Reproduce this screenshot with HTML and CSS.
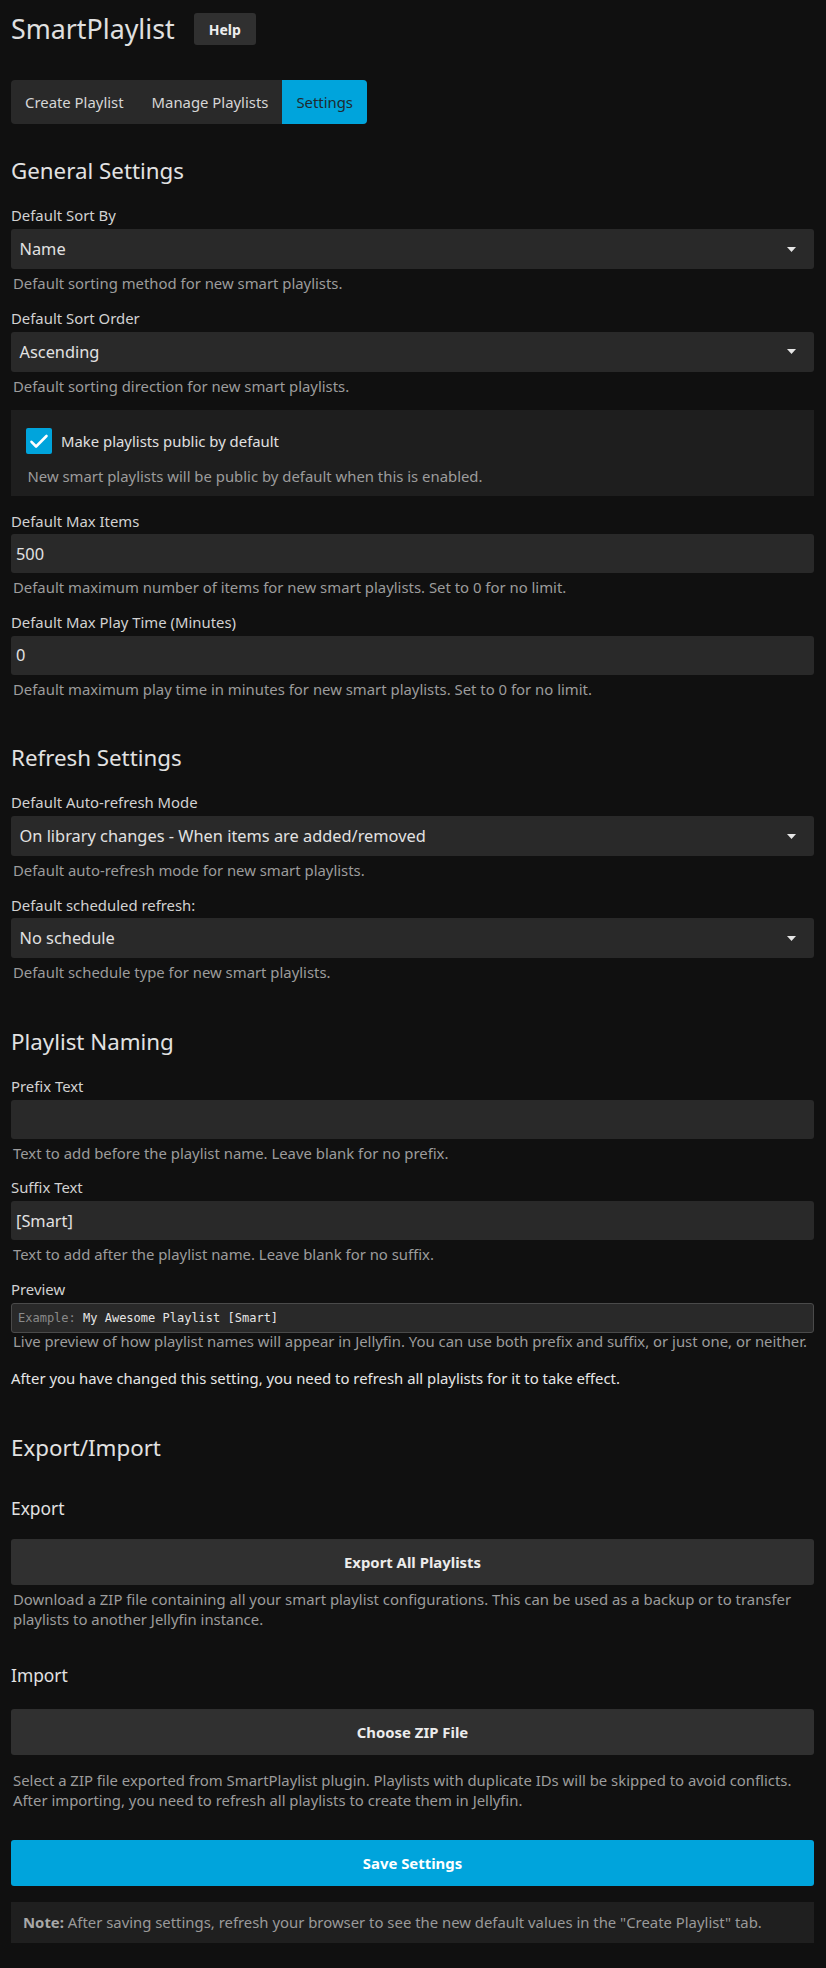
FILE: index.html
```html
<!DOCTYPE html>
<html lang="en">
<head>
<meta charset="utf-8">
<title>SmartPlaylist Settings</title>
<link rel="stylesheet" href="styles.css">
</head>
<body>
<div class="page">
  <header class="header">
    <h1 class="title">SmartPlaylist</h1>
    <button class="help-btn">Help</button>
  </header>

  <nav class="tabs">
    <span class="tab">Create Playlist</span>
    <span class="tab">Manage Playlists</span>
    <span class="tab tab-active">Settings</span>
  </nav>

  <section class="section section-first">
    <h2>General Settings</h2>
    <div class="field">
      <label class="label">Default Sort By</label>
      <div class="select"><span>Name</span><svg class="arrow" width="9" height="5" viewBox="0 0 9 5"><path d="M0 0h9L4.5 5z" fill="#e6e6e6"/></svg></div>
      <div class="help">Default sorting method for new smart playlists.</div>
    </div>
    <div class="field">
      <label class="label">Default Sort Order</label>
      <div class="select"><span>Ascending</span><svg class="arrow" width="9" height="5" viewBox="0 0 9 5"><path d="M0 0h9L4.5 5z" fill="#e6e6e6"/></svg></div>
      <div class="help">Default sorting direction for new smart playlists.</div>
    </div>
    <div class="check-box">
      <div class="check-row">
        <svg class="checkbox" width="26" height="26" viewBox="0 0 26 26"><rect width="26" height="26" rx="2" fill="#00a4dc"/><path d="M5.5 13.8l4.6 4.7L20.5 8" fill="none" stroke="#fff" stroke-width="2.6" stroke-linecap="round" stroke-linejoin="round"/></svg>
        <span class="check-label">Make playlists public by default</span>
      </div>
      <div class="help check-help">New smart playlists will be public by default when this is enabled.</div>
    </div>
    <div class="field">
      <label class="label">Default Max Items</label>
      <input class="input" type="text" value="500">
      <div class="help">Default maximum number of items for new smart playlists. Set to 0 for no limit.</div>
    </div>
    <div class="field">
      <label class="label">Default Max Play Time (Minutes)</label>
      <input class="input" type="text" value="0">
      <div class="help">Default maximum play time in minutes for new smart playlists. Set to 0 for no limit.</div>
    </div>
  </section>

  <section class="section">
    <h2>Refresh Settings</h2>
    <div class="field">
      <label class="label">Default Auto-refresh Mode</label>
      <div class="select"><span>On library changes - When items are added/removed</span><svg class="arrow" width="9" height="5" viewBox="0 0 9 5"><path d="M0 0h9L4.5 5z" fill="#e6e6e6"/></svg></div>
      <div class="help">Default auto-refresh mode for new smart playlists.</div>
    </div>
    <div class="field">
      <label class="label">Default scheduled refresh:</label>
      <div class="select"><span>No schedule</span><svg class="arrow" width="9" height="5" viewBox="0 0 9 5"><path d="M0 0h9L4.5 5z" fill="#e6e6e6"/></svg></div>
      <div class="help">Default schedule type for new smart playlists.</div>
    </div>
  </section>

  <section class="section">
    <h2>Playlist Naming</h2>
    <div class="field">
      <label class="label">Prefix Text</label>
      <input class="input" type="text" value="">
      <div class="help">Text to add before the playlist name. Leave blank for no prefix.</div>
    </div>
    <div class="field">
      <label class="label">Suffix Text</label>
      <input class="input" type="text" value="[Smart]">
      <div class="help">Text to add after the playlist name. Leave blank for no suffix.</div>
    </div>
    <div class="field field-preview">
      <label class="label">Preview</label>
      <div class="preview"><span class="preview-key">Example:</span> My Awesome Playlist [Smart]</div>
      <div class="help help-tight">Live preview of how playlist names will appear in Jellyfin. You can use both prefix and suffix, or just one, or neither.</div>
    </div>
    <p class="notice">After you have changed this setting, you need to refresh all playlists for it to take effect.</p>
  </section>

  <section class="section">
    <h2>Export/Import</h2>
    <h3 class="sub sub-export">Export</h3>
    <button class="btn">Export All Playlists</button>
    <div class="help">Download a ZIP file containing all your smart playlist configurations. This can be used as a backup or to transfer playlists to another Jellyfin instance.</div>
    <h3 class="sub sub-import">Import</h3>
    <button class="btn">Choose ZIP File</button>
    <div class="help help-import">Select a ZIP file exported from SmartPlaylist plugin. Playlists with duplicate IDs will be skipped to avoid conflicts. After importing, you need to refresh all playlists to create them in Jellyfin.</div>
  </section>

  <button class="btn btn-primary">Save Settings</button>
  <div class="note"><strong>Note:</strong> After saving settings, refresh your browser to see the new default values in the "Create Playlist" tab.</div>
</div>
</body>
</html>
```

FILE: styles.css
```css
html, body {
  margin: 0;
  padding: 0;
  background: #101010;
}

body {
  font-family: "Noto Sans", "Open Sans", sans-serif;
  font-size: 14.88px;
  line-height: 20.09px;
  color: #dddddd;
}

.page {
  padding: 13px 12px 20px 11px;
}

.header {
  display: flex;
  align-items: center;
  gap: 19px;
  height: 32px;
}

.title {
  margin: 0;
  font-size: 26.8px;
  line-height: 32px;
  font-weight: 400;
  color: #e0e0e0;
}

.help-btn {
  height: 32px;
  padding: 0 15px;
  border: 0;
  border-radius: 3px;
  background: #303030;
  color: #eeeeee;
  font-family: "Noto Sans", sans-serif;
  font-size: 14px;
  font-weight: 700;
}

.tabs {
  display: inline-flex;
  margin-top: 35px;
  height: 44px;
  background: #292929;
  border-radius: 4px;
  overflow: hidden;
}

.tab {
  display: flex;
  align-items: center;
  padding: 0 14px;
  color: #d6d6d6;
}

.tab-active {
  background: #00a4dc;
  color: #1f2a30;
}

.section {
  margin-top: 45.3px;
}

.section-first {
  margin-top: 33.4px;
}

h2 {
  margin: 0 0 20.2px;
  font-size: 22.32px;
  line-height: 27.9px;
  font-weight: 400;
  color: #e2e2e2;
}

.field {
  margin-bottom: 14.8px;
}

.label {
  display: block;
  margin-bottom: 3.5px;
  color: #d2d2d2;
}

.select {
  display: flex;
  align-items: center;
  justify-content: space-between;
  height: 40px;
  box-sizing: border-box;
  padding: 0 18px 0 8.5px;
  background: #292929;
  border-radius: 3px;
  font-size: 16.37px;
  color: #e2e2e2;
}

.arrow {
  display: block;
  flex: none;
}

.input {
  display: block;
  width: 100%;
  height: 39px;
  box-sizing: border-box;
  margin: 0;
  padding: 0 5px;
  border: 0;
  border-radius: 3px;
  background: #292929;
  font-family: "Noto Sans", sans-serif;
  font-size: 16.37px;
  color: #e2e2e2;
  outline: none;
}

.help {
  margin-top: 4px;
  padding-left: 2px;
  color: #9c9c9c;
}

.check-box {
  margin-bottom: 15.3px;
  padding: 18px 15px 9px;
  background: #1e1e1e;
}

.check-row {
  display: flex;
  align-items: center;
  height: 26px;
}

.checkbox {
  display: block;
  flex: none;
  margin-right: 9px;
}

.check-label {
  color: #e0e0e0;
}

.check-help {
  margin-top: 12px;
  padding-left: 1.5px;
}

.preview {
  height: 30px;
  box-sizing: border-box;
  padding: 0 6px;
  border: 1px solid #4a4a4a;
  border-radius: 3px;
  background: #292929;
  font-family: "DejaVu Sans Mono", "Liberation Mono", monospace;
  font-size: 12px;
  line-height: 28px;
  color: #e6e6e6;
  white-space: pre;
}

.preview-key {
  color: #8a8a8a;
}

.help-tight {
  margin-top: -2px;
}

.field-preview {
  margin-bottom: 0;
}

.notice {
  margin: 17.8px 0 0;
  color: #e6e6e6;
}

.sub {
  font-size: 17.4px;
  line-height: 21.75px;
  font-weight: 400;
  color: #e2e2e2;
}

.sub-export {
  margin: 36.6px 0 18.7px;
}

.sub-import {
  margin: 35.7px 0 21.9px;
}

.btn {
  display: block;
  width: 100%;
  height: 46.4px;
  margin: 0;
  border: 0;
  border-radius: 3px;
  background: #303030;
  color: #ececec;
  font-family: "Noto Sans", sans-serif;
  font-size: 14.88px;
  font-weight: 700;
}

.help-import {
  margin-top: 14.5px;
}

.btn-primary {
  margin-top: 30px;
  background: #00a4dc;
  color: #ffffff;
}

.note {
  margin-top: 15.6px;
  padding: 10.4px 12px 10.9px;
  background: #1f1f1f;
  color: #9a9a9a;
}

.note strong {
  color: #a8a8a8;
  font-weight: 700;
}
```
